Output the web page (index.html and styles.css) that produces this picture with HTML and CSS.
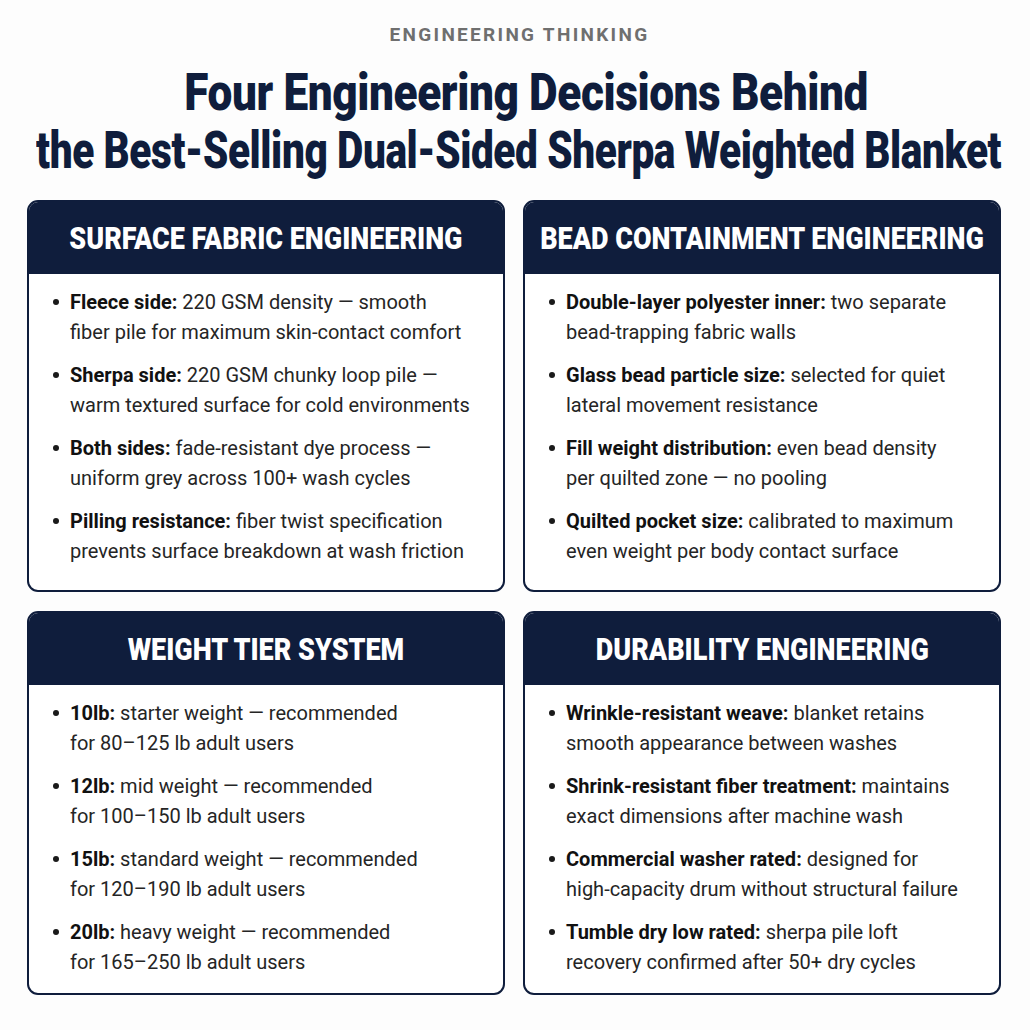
FILE: index.html
```html
<!DOCTYPE html>
<html lang="en">
<head>
<meta charset="utf-8">
<title>Four Engineering Decisions</title>
<link rel="stylesheet" href="styles.css">
</head>
<body>
<header class="hero">
  <p class="eyebrow">ENGINEERING THINKING</p>
  <h1 class="title">
    <span class="title-row title-row--first"><span class="title-text title-text--first">Four Engineering Decisions Behind</span></span>
    <span class="title-row title-row--second"><span class="title-text title-text--second">the Best-Selling Dual-Sided Sherpa Weighted Blanket</span></span>
  </h1>
</header>
<main class="grid">
  <section class="card">
    <h2 class="card-head"><span class="card-title">SURFACE FABRIC ENGINEERING</span></h2>
    <ul class="list">
      <li><span class="line"><b>Fleece side:</b> 220 GSM density — smooth</span><span class="line">fiber pile for maximum skin-contact comfort</span></li>
      <li><span class="line"><b>Sherpa side:</b> 220 GSM chunky loop pile —</span><span class="line">warm textured surface for cold environments</span></li>
      <li><span class="line"><b>Both sides:</b> fade-resistant dye process —</span><span class="line">uniform grey across 100+ wash cycles</span></li>
      <li><span class="line"><b>Pilling resistance:</b> fiber twist specification</span><span class="line">prevents surface breakdown at wash friction</span></li>
    </ul>
  </section>
  <section class="card">
    <h2 class="card-head"><span class="card-title">BEAD CONTAINMENT ENGINEERING</span></h2>
    <ul class="list">
      <li><span class="line"><b>Double-layer polyester inner:</b> two separate</span><span class="line">bead-trapping fabric walls</span></li>
      <li><span class="line"><b>Glass bead particle size:</b> selected for quiet</span><span class="line">lateral movement resistance</span></li>
      <li><span class="line"><b>Fill weight distribution:</b> even bead density</span><span class="line">per quilted zone — no pooling</span></li>
      <li><span class="line"><b>Quilted pocket size:</b> calibrated to maximum</span><span class="line">even weight per body contact surface</span></li>
    </ul>
  </section>
  <section class="card card--compact">
    <h2 class="card-head"><span class="card-title">WEIGHT TIER SYSTEM</span></h2>
    <ul class="list">
      <li><span class="line"><b>10lb:</b> starter weight — recommended</span><span class="line">for 80–125 lb adult users</span></li>
      <li><span class="line"><b>12lb:</b> mid weight — recommended</span><span class="line">for 100–150 lb adult users</span></li>
      <li><span class="line"><b>15lb:</b> standard weight — recommended</span><span class="line">for 120–190 lb adult users</span></li>
      <li><span class="line"><b>20lb:</b> heavy weight — recommended</span><span class="line">for 165–250 lb adult users</span></li>
    </ul>
  </section>
  <section class="card card--compact">
    <h2 class="card-head"><span class="card-title">DURABILITY ENGINEERING</span></h2>
    <ul class="list">
      <li><span class="line"><b>Wrinkle-resistant weave:</b> blanket retains</span><span class="line">smooth appearance between washes</span></li>
      <li><span class="line"><b>Shrink-resistant fiber treatment:</b> maintains</span><span class="line">exact dimensions after machine wash</span></li>
      <li><span class="line"><b>Commercial washer rated:</b> designed for</span><span class="line">high-capacity drum without structural failure</span></li>
      <li><span class="line"><b>Tumble dry low rated:</b> sherpa pile loft</span><span class="line">recovery confirmed after 50+ dry cycles</span></li>
    </ul>
  </section>
</main>
</body>
</html>
```
FILE: styles.css
```css
html {
  overflow: hidden;
}
body {
  margin: 0;
  background: #fdfdfd;
  font-family: Roboto, "Liberation Sans", sans-serif;
  color: #1c1c1c;
  width: 1030px;
}
.hero {
  padding-top: 22px;
  text-align: center;
}
.eyebrow {
  margin: 0;
  padding-left: 9px;
  font-size: 19px;
  line-height: 26px;
  font-weight: 700;
  letter-spacing: 2.3px;
  color: #6f6f6f;
}
.title {
  margin: 16px 0 0;
  display: flex;
  flex-direction: column;
  align-items: center;
  color: #0f1d3c;
  font-size: 52px;
  line-height: 58px;
  font-weight: 900;
}
.title-row {
  display: flex;
  justify-content: center;
  width: 100%;
  box-sizing: border-box;
}
.title-row--first {
  padding-left: 22px;
}
.title-row--second {
  padding-left: 7px;
}
.title-text {
  display: inline-block;
  white-space: nowrap;
  flex: none;
  letter-spacing: -0.5px;
}
.title-text--first {
  transform: scaleX(0.85);
}
.title-text--second {
  transform: scaleX(0.78);
}
.grid {
  display: grid;
  grid-template-columns: 478px 478px;
  column-gap: 18px;
  row-gap: 19px;
  padding: 20px 0 0 27px;
}
.card {
  border: 2px solid #0f1d3c;
  border-radius: 11px;
  overflow: hidden;
  background: #ffffff;
  display: flex;
  flex-direction: column;
}
.card-head {
  margin: 0;
  height: 72px;
  background: #0f1d3c;
  display: flex;
  align-items: center;
  justify-content: center;
  color: #ffffff;
  font-size: 31px;
  font-weight: 900;
}
.card-title {
  display: inline-block;
  white-space: nowrap;
  transform: scaleX(0.87);
}
.list {
  list-style: none;
  margin: 0;
  padding: 13px 10px 24px 24px;
  display: flex;
  flex-direction: column;
  gap: 13px;
}
.card--compact .list {
  padding-bottom: 16px;
}
.list li {
  position: relative;
  padding-left: 17px;
  font-size: 20px;
  line-height: 30px;
  color: #252525;
}
.list li::before {
  content: "";
  position: absolute;
  left: 0;
  top: 12px;
  width: 6px;
  height: 6px;
  border-radius: 50%;
  background: #1a1a1a;
}
.line {
  display: block;
  white-space: nowrap;
}
.list b {
  font-weight: 700;
  color: #111;
}
```
